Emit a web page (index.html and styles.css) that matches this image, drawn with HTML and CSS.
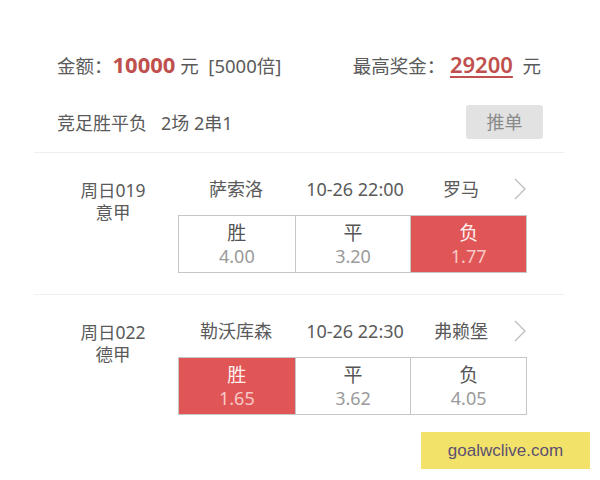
FILE: index.html
```html
<!DOCTYPE html>
<html>
<head>
<meta charset="utf-8">
<link rel="stylesheet" href="styles.css">
</head>
<body>
<div class="page">
  <div class="summary">
    <div class="amount">金额：<span class="num bold">10000</span> 元&nbsp;&nbsp;[5000倍]</div>
    <div class="prize">最高奖金：&nbsp;<span class="num ul">29200</span>&nbsp; 元</div>
  </div>
  <div class="play">
    <div class="play-text">竞足胜平负&nbsp;&nbsp;&nbsp;2场 2串1</div>
    <div class="btn">推单</div>
  </div>
  <div class="divider"></div>
  <div class="match">
    <div class="info"><div>周日019</div><div>意甲</div></div>
    <div class="body">
      <div class="teams">
        <span>萨索洛</span><span>10-26 22:00</span><span>罗马</span>
        <svg class="chev" width="12" height="22" viewBox="0 0 12 22"><polyline points="1,1 11,11 1,21" fill="none" stroke="#bdbdbd" stroke-width="1.3"/></svg>
      </div>
      <div class="odds">
        <div class="cell"><div class="k">胜</div><div class="v">4.00</div></div>
        <div class="cell"><div class="k">平</div><div class="v">3.20</div></div>
        <div class="cell sel"><div class="k">负</div><div class="v">1.77</div></div>
      </div>
    </div>
  </div>
  <div class="divider"></div>
  <div class="match">
    <div class="info"><div>周日022</div><div>德甲</div></div>
    <div class="body">
      <div class="teams">
        <span>勒沃库森</span><span>10-26 22:30</span><span>弗赖堡</span>
        <svg class="chev" width="12" height="22" viewBox="0 0 12 22"><polyline points="1,1 11,11 1,21" fill="none" stroke="#bdbdbd" stroke-width="1.3"/></svg>
      </div>
      <div class="odds">
        <div class="cell sel"><div class="k">胜</div><div class="v">1.65</div></div>
        <div class="cell"><div class="k">平</div><div class="v">3.62</div></div>
        <div class="cell"><div class="k">负</div><div class="v">4.05</div></div>
      </div>
    </div>
  </div>
  <div class="watermark">goalwclive.com</div>
</div>
</body>
</html>
```
FILE: styles.css
```css
html, body { margin: 0; padding: 0; background: #fff; }
body {
  width: 600px; height: 480px; overflow: hidden;
  font-family: "Noto Sans", "Noto Sans CJK SC", sans-serif;
  color: #5a5a5a;
}
.page { position: relative; width: 600px; height: 480px; padding-top: 52px; box-sizing: border-box; }
.summary {
  display: flex; justify-content: space-between; align-items: center;
  padding: 0 59px 0 57px; font-size: 18.5px; line-height: 26px; height: 26px;
}
.num { color: #c0504d; font-size: 22px; }
.bold { font-weight: 700; }
.ul { font-weight: 600; text-decoration: underline; text-underline-offset: 3px; text-decoration-thickness: 2px; }
.play {
  display: flex; justify-content: space-between; align-items: center;
  margin-top: 27px; padding: 0 57px 0 57px; height: 34px;
  font-size: 18px;
}
.btn {
  width: 77px; height: 34px; line-height: 34px; text-align: center;
  background: #e2e2e2; color: #8a8a8a; border-radius: 3px; font-size: 18px;
}
.divider { height: 1px; background: #efefef; margin: 0 36px 0 34px; }
.play + .divider { margin-top: 13px; }
.match { display: flex; padding: 24px 0 21px 0; }
.match:last-of-type { padding-top: 25px; }
.info {
  width: 72px; margin-left: 77px; margin-right: 29px; text-align: center;
  font-size: 17.5px; line-height: 22px; padding-top: 2px; white-space: nowrap;
}
.body { width: 360px; }
.teams {
  display: grid; grid-template-columns: 116px 122px 90px 12px;
  align-items: center; height: 24px; font-size: 18px; line-height: 24px;
  text-align: center;
}
.chev { margin-left: 8px; }
.odds {
  margin-top: 14px; width: 349px; display: grid; grid-template-columns: 1fr 1fr 1fr;
  border: 1px solid #c6c6c6; box-sizing: border-box;
}
.cell {
  height: 56px; box-sizing: border-box; padding-top: 5px; text-align: center;
  border-left: 1px solid #c6c6c6;
}
.cell:first-child { border-left: none; }
.k { font-size: 19px; line-height: 24px; color: #555; }
.v { font-size: 18px; line-height: 22px; color: #9a9a9a; }
.sel { background: #e05656; }
.sel .k { color: #fff0f0; }
.sel .v { color: #f8c8c8; }
.watermark {
  position: absolute; left: 421px; top: 432px; width: 169px; height: 37px;
  background: #f3e26a; color: #5c5070; font-family: "Liberation Sans", sans-serif;
  font-size: 17px; line-height: 37px; text-align: center;
}
```
